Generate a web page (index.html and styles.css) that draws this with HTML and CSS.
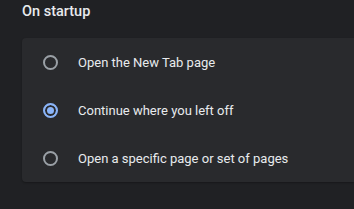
FILE: index.html
```html
<html>
    <head>
        <title>Settings</title>
        <link rel="stylesheet" href="styles.css">
    </head>
    <body>
        <div class="section">
            <h2 class="section-title">On startup</h2>
            <div class="card">
                <!-- startup options -->
                <label class="option">
                    <span class="radio"></span>
                    <span class="label">Open the New Tab page</span>
                </label>
                <label class="option">
                    <span class="radio checked"></span>
                    <span class="label">Continue where you left off</span>
                </label>
                <label class="option">
                    <span class="radio"></span>
                    <span class="label">Open a specific page or set of pages</span>
                </label>
            </div>
        </div>
    </body>
</html>
```

FILE: styles.css
```css
body {
    margin: 0;
    background: #202124;
    color: #e8eaed;
    font-family: Roboto, "Liberation Sans", sans-serif;
    overflow: hidden;
}

.section {
    padding: 2px 0 0 22px;
}

.section-title {
    margin: 0;
    font-size: 14.5px;
    font-weight: 500;
    line-height: 20px;
    height: 36px;
}

.card {
    background: #292a2d;
    border-radius: 4px 0 0 4px;
    box-shadow: 0 1px 2px rgba(0, 0, 0, 0.3);
}

.option {
    display: flex;
    align-items: center;
    height: 48px;
    padding-left: 21px;
    font-size: 13px;
}

.radio {
    width: 11px;
    height: 11px;
    border: 2px solid #9aa0a6;
    border-radius: 50%;
    margin-right: 20px;
    flex-shrink: 0;
}

.radio.checked {
    border-color: #8ab4f8;
    background: #8ab4f8;
    box-shadow: inset 0 0 0 2px #292a2d;
}
```
